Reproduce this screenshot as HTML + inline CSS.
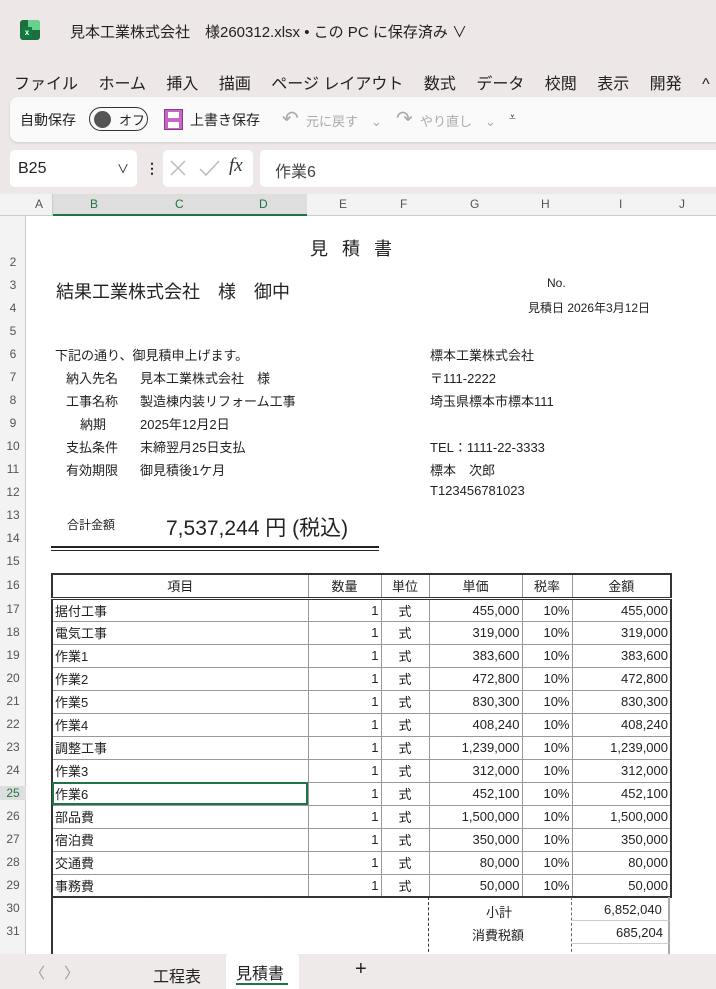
<!DOCTYPE html>
<html><head><meta charset="utf-8"><style>
*{margin:0;padding:0;box-sizing:border-box}
body{width:716px;height:989px;overflow:hidden;background:#ede7e7;font-family:"Liberation Sans","Noto Sans CJK JP",sans-serif;position:relative;color:#222}
.a{position:absolute;white-space:nowrap}
.rn{position:absolute;left:0;width:26px;text-align:center;font-size:12px;color:#555}
.t{font-size:13px;color:#222}
table{border-collapse:collapse;position:absolute;left:51px;top:573px;font-size:13px;table-layout:fixed}
td{border:1px solid #999;height:23px;padding:0 2px;white-space:nowrap;color:#222}
th{font-weight:normal;border:1px solid #999;border-bottom:3px double #333;height:24px}
.r{text-align:right}.c{text-align:center}
</style></head><body>
<div class="a" style="left:20px;top:20px;width:20px;height:20px;background:#1d6e3c;border-radius:3px"></div>
<div class="a" style="left:28px;top:20px;width:12px;height:10px;background:#6ad08d;border-radius:0 3px 0 0"></div>
<div class="a" style="left:22px;top:27px;width:10px;height:11px;background:#107c41;color:#fff;font-size:8px;font-weight:bold;text-align:center;line-height:11px">x</div>
<div class="a" style="left:70px;top:21px;font-size:15px;color:#222">見本工業株式会社　様260312.xlsx • この PC に保存済み ∨</div>
<div class="a" style="left:14px;top:70px;font-size:16px;color:#222">ファイル　 ホーム　 挿入　 描画　 ページ レイアウト　 数式　 データ　 校閲　 表示　 開発　 ^</div>
<div class="a" style="left:10px;top:97px;width:720px;height:45px;background:#fafafa;border-radius:8px;box-shadow:0 1px 2px #ccc"></div>
<div class="a" style="left:20px;top:110px;font-size:14px">自動保存</div>
<div class="a" style="left:89px;top:107px;width:59px;height:24px;border:1.5px solid #333;border-radius:12px"></div>
<div class="a" style="left:94px;top:111px;width:17px;height:17px;background:#555;border-radius:50%"></div>
<div class="a" style="left:119px;top:110px;font-size:13px">オフ</div>
<div class="a" style="left:164px;top:109px;width:19px;height:21px;background:#c667c6;border:1.5px solid #8a3a8a"></div>
<div class="a" style="left:168px;top:112px;width:11px;height:6px;background:#fff"></div>
<div class="a" style="left:168px;top:122px;width:11px;height:6px;background:#fff"></div>
<div class="a" style="left:190px;top:110px;font-size:14px">上書き保存</div>
<div class="a" style="left:282px;top:106px;font-size:20px;color:#aaa">↶</div>
<div class="a" style="left:306px;top:111px;font-size:13px;color:#aaa">元に戻す　⌄</div>
<div class="a" style="left:396px;top:106px;font-size:20px;color:#aaa">↷</div>
<div class="a" style="left:420px;top:111px;font-size:13px;color:#aaa">やり直し　⌄</div>
<div class="a" style="left:509px;top:110px;font-size:12px;color:#333">⩡</div>
<div class="a" style="left:10px;top:150px;width:127px;height:37px;background:#fff;border-radius:5px"></div>
<div class="a" style="left:18px;top:160px;font-size:16px">B25</div>
<div class="a" style="left:117px;top:160px;font-size:12px">∨</div>
<div class="a" style="left:145px;top:160px;font-size:14px;font-weight:bold">⋮</div>
<div class="a" style="left:163px;top:150px;width:90px;height:37px;background:#fff;border-radius:5px"></div>
<svg class="a" style="left:168px;top:158px" width="56" height="20"><path d="M3 3L17 17M17 3L3 17M32 11L38 17L51 3" stroke="#bbb" stroke-width="1.5" fill="none"/></svg>
<div class="a" style="left:229px;top:155px;font-size:19px;font-style:italic;font-family:'Liberation Serif',serif;color:#333">fx</div>
<div class="a" style="left:260px;top:150px;width:470px;height:37px;background:#fff;border-radius:5px"></div>
<div class="a" style="left:275px;top:158px;font-size:16px;color:#444">作業6</div>
<div class="a" style="left:0;top:194px;width:716px;height:760px;background:#fff"></div>
<div class="a" style="left:0;top:194px;width:716px;height:22px;background:#f3f3f3;border-bottom:1px solid #ccc"></div>
<div class="a" style="left:52px;top:194px;width:255px;height:22px;background:#dedede;border-bottom:2px solid #217346"></div>
<div class="a" style="left:0;top:216px;width:26px;height:740px;background:#f3f3f3;border-right:1px solid #ccc"></div>
<div class="a" style="top:197px;left:0;font-size:12px;color:#555;width:716px;height:18px">
<span class="a" style="left:35px">A</span><span class="a" style="left:90px;color:#217346">B</span><span class="a" style="left:175px;color:#217346">C</span><span class="a" style="left:259px;color:#217346">D</span><span class="a" style="left:339px">E</span><span class="a" style="left:400px">F</span><span class="a" style="left:470px">G</span><span class="a" style="left:541px">H</span><span class="a" style="left:619px">I</span><span class="a" style="left:679px">J</span></div>
<div class="a" style="left:52px;top:194px;height:22px;width:1px;background:#ccc"></div>
<div class="rn" style="top:255px">2</div><div class="rn" style="top:278px">3</div><div class="rn" style="top:301px">4</div><div class="rn" style="top:324px">5</div><div class="rn" style="top:347px">6</div><div class="rn" style="top:370px">7</div><div class="rn" style="top:393px">8</div><div class="rn" style="top:416px">9</div><div class="rn" style="top:439px">10</div><div class="rn" style="top:462px">11</div><div class="rn" style="top:485px">12</div><div class="rn" style="top:508px">13</div><div class="rn" style="top:531px">14</div><div class="rn" style="top:554px">15</div><div class="rn" style="top:578px">16</div><div class="rn" style="top:602px">17</div><div class="rn" style="top:625px">18</div><div class="rn" style="top:648px">19</div><div class="rn" style="top:671px">20</div><div class="rn" style="top:694px">21</div><div class="rn" style="top:717px">22</div><div class="rn" style="top:740px">23</div><div class="rn" style="top:763px">24</div><div class="rn" style="top:786px;color:#217346;background:#dedede">25</div><div class="rn" style="top:809px">26</div><div class="rn" style="top:832px">27</div><div class="rn" style="top:855px">28</div><div class="rn" style="top:878px">29</div><div class="rn" style="top:901px">30</div><div class="rn" style="top:924px">31</div>
<div class="a" style="left:310px;top:235px;font-size:18px;letter-spacing:14px">見積書</div>
<div class="a" style="left:56px;top:278px;font-size:18px">結果工業株式会社　様　御中</div>
<div class="a" style="left:547px;top:276px;font-size:12px">No.</div>
<div class="a" style="left:528px;top:299px;font-size:12px">見積日 2026年3月12日</div>
<div class="a t" style="left:55px;top:345px">下記の通り、御見積申上げます。</div>
<div class="a t" style="left:66px;top:368px">納入先名</div><div class="a t" style="left:140px;top:368px">見本工業株式会社　様</div>
<div class="a t" style="left:66px;top:391px">工事名称</div><div class="a t" style="left:140px;top:391px">製造棟内装リフォーム工事</div>
<div class="a t" style="left:80px;top:414px">納期</div><div class="a t" style="left:140px;top:414px">2025年12月2日</div>
<div class="a t" style="left:66px;top:437px">支払条件</div><div class="a t" style="left:140px;top:437px">末締翌月25日支払</div>
<div class="a t" style="left:66px;top:460px">有効期限</div><div class="a t" style="left:140px;top:460px">御見積後1ケ月</div>
<div class="a t" style="left:430px;top:345px">標本工業株式会社</div>
<div class="a t" style="left:430px;top:368px">〒111-2222</div>
<div class="a t" style="left:430px;top:391px">埼玉県標本市標本111</div>
<div class="a t" style="left:430px;top:437px">TEL：1111-22-3333</div>
<div class="a t" style="left:430px;top:460px">標本　次郎</div>
<div class="a t" style="left:430px;top:483px">T123456781023</div>
<div class="a" style="left:67px;top:516px;font-size:12px">合計金額</div>
<div class="a" style="left:166px;top:512px;font-size:21px">7,537,244 円 (税込)</div>
<div class="a" style="left:51px;top:546px;width:328px;height:5px;border-top:2px solid #222;border-bottom:1px solid #222"></div>
<table style="border:2px solid #333;width:619px">
<colgroup><col style="width:256px"><col style="width:73px"><col style="width:48px"><col style="width:93px"><col style="width:50px"><col style="width:99px"></colgroup>
<tr><th>項目</th><th>数量</th><th>単位</th><th>単価</th><th>税率</th><th>金額</th></tr>
<tr><td>据付工事</td><td class="r">1</td><td class="c">式</td><td class="r">455,000</td><td class="r">10%</td><td class="r">455,000</td></tr>
<tr><td>電気工事</td><td class="r">1</td><td class="c">式</td><td class="r">319,000</td><td class="r">10%</td><td class="r">319,000</td></tr>
<tr><td>作業1</td><td class="r">1</td><td class="c">式</td><td class="r">383,600</td><td class="r">10%</td><td class="r">383,600</td></tr>
<tr><td>作業2</td><td class="r">1</td><td class="c">式</td><td class="r">472,800</td><td class="r">10%</td><td class="r">472,800</td></tr>
<tr><td>作業5</td><td class="r">1</td><td class="c">式</td><td class="r">830,300</td><td class="r">10%</td><td class="r">830,300</td></tr>
<tr><td>作業4</td><td class="r">1</td><td class="c">式</td><td class="r">408,240</td><td class="r">10%</td><td class="r">408,240</td></tr>
<tr><td>調整工事</td><td class="r">1</td><td class="c">式</td><td class="r">1,239,000</td><td class="r">10%</td><td class="r">1,239,000</td></tr>
<tr><td>作業3</td><td class="r">1</td><td class="c">式</td><td class="r">312,000</td><td class="r">10%</td><td class="r">312,000</td></tr>
<tr><td style="outline:2px solid #217346;outline-offset:-2px">作業6</td><td class="r">1</td><td class="c">式</td><td class="r">452,100</td><td class="r">10%</td><td class="r">452,100</td></tr>
<tr><td>部品費</td><td class="r">1</td><td class="c">式</td><td class="r">1,500,000</td><td class="r">10%</td><td class="r">1,500,000</td></tr>
<tr><td>宿泊費</td><td class="r">1</td><td class="c">式</td><td class="r">350,000</td><td class="r">10%</td><td class="r">350,000</td></tr>
<tr><td>交通費</td><td class="r">1</td><td class="c">式</td><td class="r">80,000</td><td class="r">10%</td><td class="r">80,000</td></tr>
<tr><td>事務費</td><td class="r">1</td><td class="c">式</td><td class="r">50,000</td><td class="r">10%</td><td class="r">50,000</td></tr>
</table>
<div class="a" style="left:51px;top:897px;width:619px;border-top:1px dashed #333"></div>
<div class="a" style="left:51px;top:897px;width:2px;height:60px;background:#333"></div>
<div class="a" style="left:428px;top:897px;height:60px;border-left:1px dashed #333"></div>
<div class="a" style="left:571px;top:897px;height:60px;border-left:1px dashed #666"></div>
<div class="a" style="left:668px;top:897px;width:2px;height:60px;background:#aaa"></div>
<div class="a" style="left:571px;top:920px;width:98px;border-top:1px solid #ccc"></div>
<div class="a" style="left:571px;top:943px;width:98px;border-top:1px solid #ccc"></div>
<div class="a t" style="left:486px;top:902px">小計</div>
<div class="a t" style="left:604px;top:902px">6,852,040</div>
<div class="a t" style="left:472px;top:925px">消費税額</div>
<div class="a t" style="left:616px;top:925px">685,204</div>
<div class="a" style="left:0;top:954px;width:716px;height:35px;background:#efeaea"></div>
<div class="a" style="left:30px;top:962px;font-size:15px;color:#999">〈　 〉</div>
<div class="a" style="left:153px;top:963px;font-size:16px">工程表</div>
<div class="a" style="left:226px;top:953px;width:73px;height:36px;background:#fff;border-radius:5px 5px 0 0"></div>
<div class="a" style="left:236px;top:960px;font-size:16px">見積書</div>
<div class="a" style="left:236px;top:983px;width:52px;height:2px;background:#217346"></div>
<div class="a" style="left:355px;top:958px;font-size:20px">+</div>
</body></html>
